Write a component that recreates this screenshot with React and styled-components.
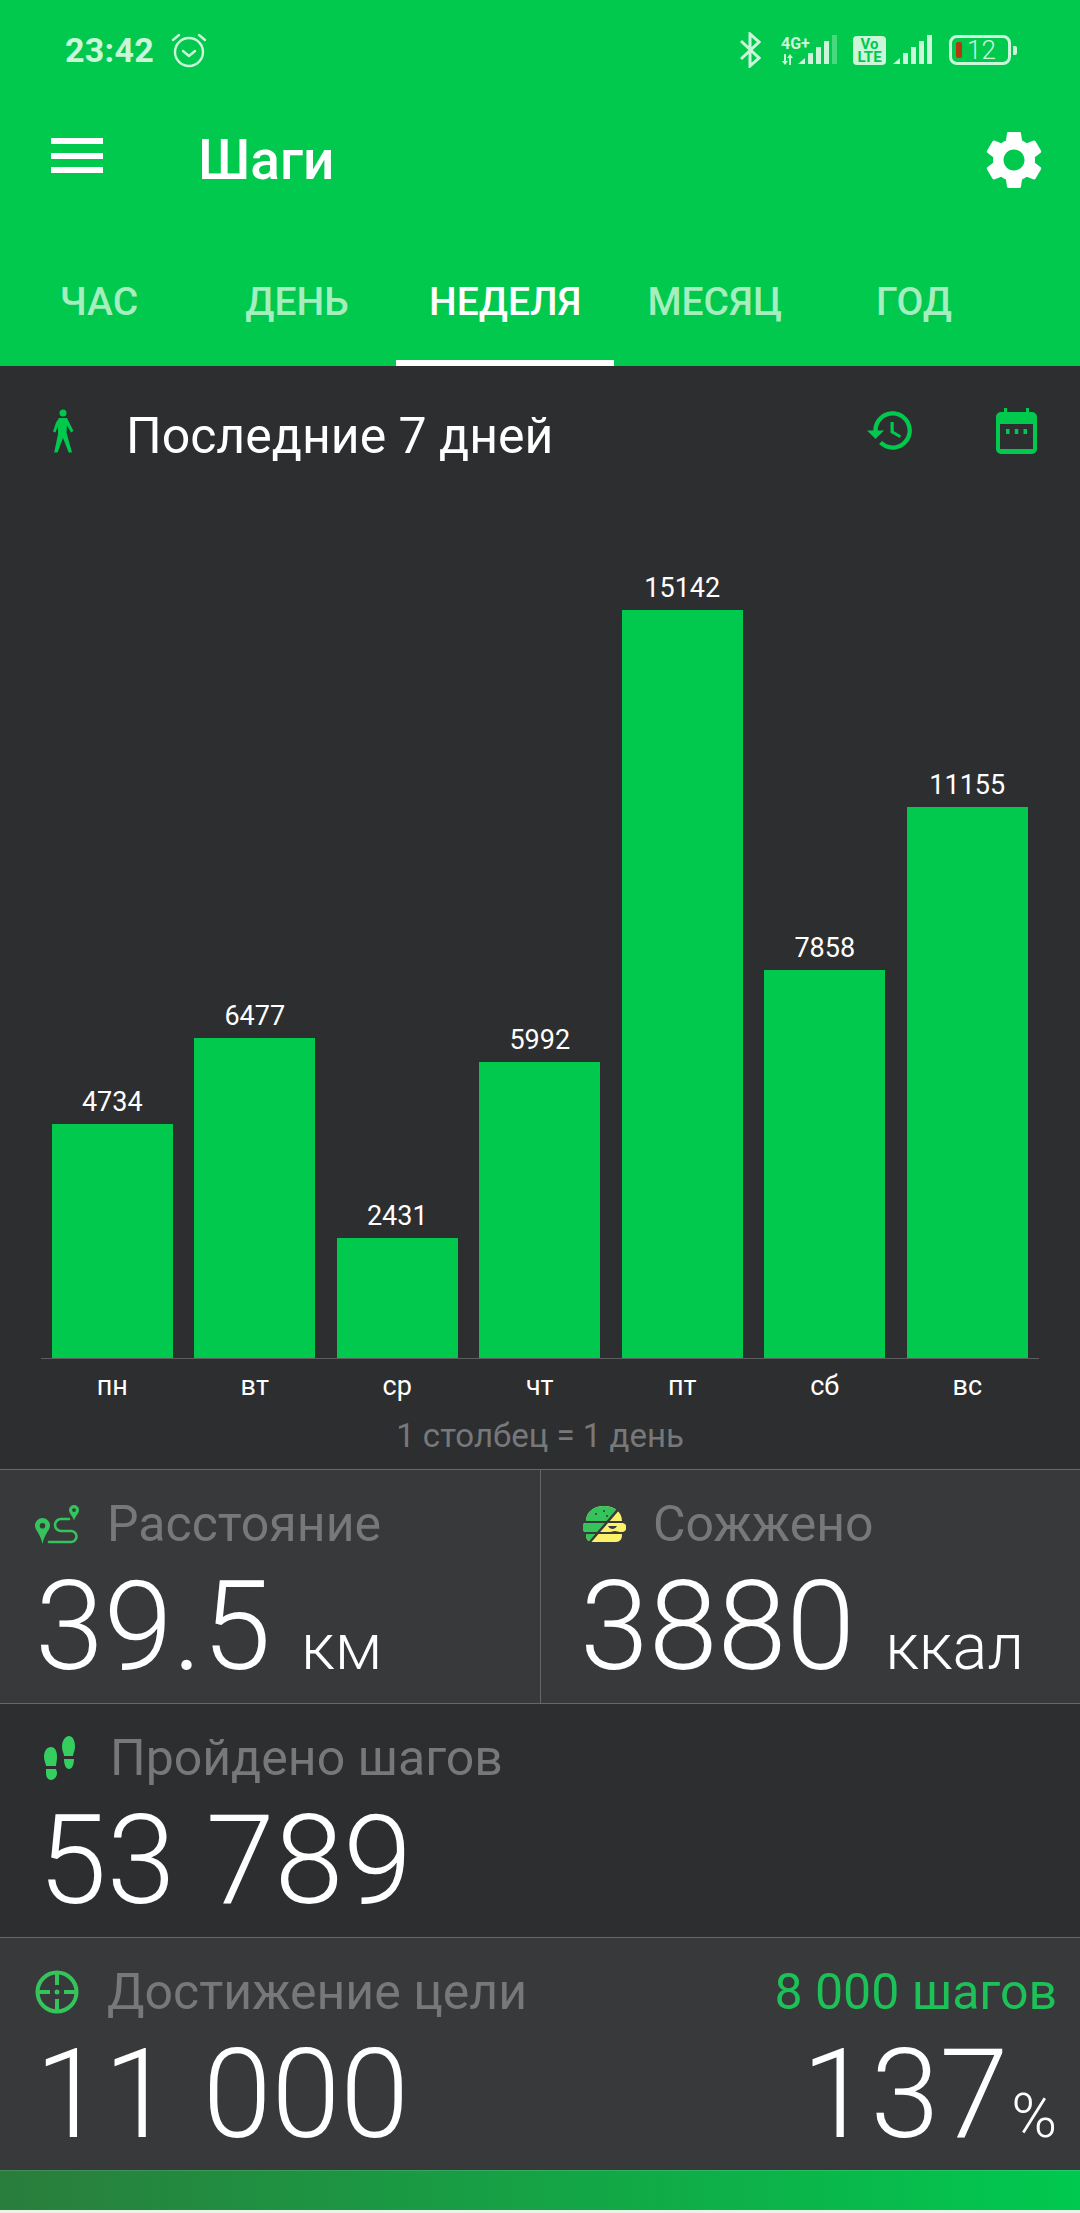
import React from 'react';
import styled, { createGlobalStyle } from 'styled-components';

const GREEN = '#00c94e';
const ICON_GREEN = '#35c45c';
const STATUS = '#ccf6da';
const PANEL = '#38393b';

const days = [
  { name: 'пн', steps: 4734 },
  { name: 'вт', steps: 6477 },
  { name: 'ср', steps: 2431 },
  { name: 'чт', steps: 5992 },
  { name: 'пт', steps: 15142 },
  { name: 'сб', steps: 7858 },
  { name: 'вс', steps: 11155 },
];

const tabs = ['ЧАС', 'ДЕНЬ', 'НЕДЕЛЯ', 'МЕСЯЦ', 'ГОД'];

const GlobalStyle = createGlobalStyle`
  html, body {
    margin: 0;
    padding: 0;
    background: #2d2e30;
  }
  * {
    box-sizing: border-box;
  }
`;

const Page = styled.div`
  width: 1080px;
  height: 2213px;
  overflow: hidden;
  display: flex;
  flex-direction: column;
  background: #2d2e30;
  font-family: Roboto, "Noto Sans", sans-serif;
  color: #fff;
`;

const Header = styled.header`
  background: ${GREEN};
  height: 366px;
  display: flex;
  flex-direction: column;
`;

const StatusBar = styled.div`
  height: 100px;
  padding: 30px 63px 0 65px;
  display: flex;
  align-items: flex-start;
  color: ${STATUS};
`;

const Clock = styled.span`
  font-size: 34px;
  line-height: 40px;
  font-weight: 700;
  letter-spacing: 0.3px;
`;

const StatusLeft = styled.div`
  display: flex;
  align-items: center;
  gap: 17px;
  flex: 1;
`;

const StatusRight = styled.div`
  display: flex;
  align-items: center;
  height: 40px;
`;

const NetLabel = styled.div`
  display: flex;
  flex-direction: column;
  gap: 3px;
  width: 34px;
  margin: 0 -17px 0 20px;
  font-size: 16px;
  line-height: 15px;
  font-weight: 700;
`;

const VoLte = styled.div`
  width: 33px;
  height: 29px;
  margin: 0 7px 0 15px;
  background: ${STATUS};
  border-radius: 4px;
  color: ${GREEN};
  font-size: 15px;
  line-height: 13px;
  font-weight: 700;
  white-space: pre-line;
  text-align: center;
  padding-top: 2px;
`;

const Battery = styled.div`
  width: 62px;
  height: 30px;
  margin-left: 16px;
  border: 3px solid ${STATUS};
  border-radius: 8px;
  display: flex;
  align-items: center;
  padding-left: 4px;
  gap: 5px;
  font-size: 26px;
  font-weight: 300;
`;

const BatteryLevel = styled.i`
  width: 6px;
  height: 16px;
  border-radius: 2px;
  background: #b5390f;
`;

const BatteryNub = styled.i`
  width: 4px;
  height: 9px;
  margin-left: 2px;
  border-radius: 0 2px 2px 0;
  background: ${STATUS};
`;

const Toolbar = styled.div`
  height: 120px;
  padding: 0 31px 0 51px;
  display: flex;
  align-items: center;
`;

const Burger = styled.div`
  width: 52px;
  height: 35px;
  margin-bottom: 9px;
  display: flex;
  flex-direction: column;
  justify-content: space-between;
  span {
    height: 6px;
    background: #fff;
  }
`;

const Title = styled.h1`
  flex: 1;
  margin: 0 0 0 95px;
  font-size: 55px;
  font-weight: 500;
  line-height: 60px;
`;

const Tabs = styled.nav`
  display: flex;
  height: 146px;
`;

const Tab = styled.div`
  min-width: 198px;
  padding: 24px 33px 0;
  display: flex;
  align-items: center;
  justify-content: center;
  font-size: 39px;
  font-weight: 500;
  color: ${(p) => (p.$active ? '#fff' : '#a5eebe')};
  border-bottom: 6px solid ${(p) => (p.$active ? '#fff' : 'transparent')};
`;

const SubHeader = styled.div`
  height: 129px;
  padding: 0 43px 0 50px;
  display: flex;
  align-items: center;
`;

const RangeTitle = styled.div`
  flex: 1;
  margin-left: 51px;
  padding-top: 10px;
  font-size: 50px;
  line-height: 56px;
`;

const ActionIcons = styled.div`
  display: flex;
  align-items: center;
  gap: 82px;
`;

const Chart = styled.section`
  height: 974px;
  padding-left: 41px;
  display: flex;
  flex-direction: column;
`;

const Bars = styled.div`
  height: 864px;
  width: 998px;
  display: grid;
  grid-template-columns: repeat(7, 142.5px);
  border-bottom: 1px solid #5c5d5f;
`;

const BarColumn = styled.div`
  display: flex;
  flex-direction: column;
  align-items: center;
  justify-content: flex-end;
`;

const BarValue = styled.span`
  font-size: 27px;
  line-height: 32px;
  margin-bottom: 6px;
`;

const Bar = styled.div`
  width: 121px;
  background: ${GREEN};
`;

const DayRow = styled.div`
  width: 998px;
  height: 53px;
  display: grid;
  grid-template-columns: repeat(7, 142.5px);
  align-items: center;
  text-align: center;
  font-size: 27px;
`;

const ChartNote = styled.div`
  width: 998px;
  height: 48px;
  line-height: 48px;
  text-align: center;
  font-size: 33px;
  color: #77787a;
`;

const StatRow = styled.div`
  height: ${(p) => p.$height}px;
  display: flex;
  border-top: 1px solid #66676a;
  background: ${(p) => (p.$raised ? PANEL : '#2d2e30')};
`;

const StatCell = styled.div`
  flex: ${(p) => (p.$half ? '0 0 540px' : '1')};
  padding: 29px 23px 0 ${(p) => p.$inset}px;
  & + & {
    border-left: 1px solid #66676a;
  }
`;

const StatHead = styled.div`
  height: 50px;
  display: flex;
  align-items: center;
  gap: ${(p) => p.$gap}px;
  font-size: 50px;
  color: #77787a;
`;

const StatTitle = styled.span`
  flex: 1;
  white-space: nowrap;
`;

const GoalTarget = styled.span`
  color: #1cc258;
  font-size: 50px;
`;

const StatBody = styled.div`
  margin: 13px 0 0 ${(p) => p.$shift || 0}px;
  display: flex;
  justify-content: space-between;
  align-items: baseline;
`;

const StatValue = styled.span`
  font-size: 124px;
  line-height: 130px;
  font-weight: 300;
  white-space: nowrap;
`;

const StatUnit = styled.span`
  margin-left: ${(p) => p.$gap}px;
  font-size: ${(p) => p.$size}px;
  font-weight: 300;
`;

const ProgressBar = styled.div`
  height: 40px;
  background: linear-gradient(90deg, #2a7d3c 0%, #00c94f 100%);
  border-top: 1px solid rgba(255, 255, 255, 0.12);
`;

const BottomEdge = styled.div`
  flex: 1;
  background: #e6f4ea;
`;

const Bluetooth = () => (
  <svg width="22" height="36" viewBox="0 0 22 36" fill="none" stroke={STATUS} strokeWidth="3">
    <path d="M2 9l18 17-9 8V2l9 8L2 27" />
  </svg>
);

const Signal = ({ faded }) => (
  <svg width="40" height="30" viewBox="0 0 40 30" fill={STATUS}>
    <path d="M0 29l7-6v6z" />
    <rect x="10" y="18" width="5" height="11" />
    <rect x="18" y="12" width="5" height="17" />
    <rect x="26" y="6" width="5" height="23" />
    <rect x="34" y="0" width="5" height="29" opacity={faded ? 0.35 : 1} />
  </svg>
);

const DataArrows = () => (
  <svg width="13" height="11" viewBox="0 0 13 11" fill={STATUS}>
    <path d="M3 0h2v7h2l-3 4-3-4h2zM8 11h2V4h2L9 0 6 4h2z" />
  </svg>
);

const AlarmIcon = () => (
  <svg width="36" height="36" viewBox="0 0 36 36" fill="none" stroke={STATUS} strokeWidth="2.4" strokeLinecap="round" strokeLinejoin="round">
    <circle cx="18" cy="20" r="14" />
    <path d="M12 19l6 5 6-5M2 8l6-5M34 8l-6-5" />
  </svg>
);

const GearIcon = () => (
  <svg width="70" height="70" viewBox="0 0 24 24" fill="#fff">
    <path d="M19.14 12.94c.04-.3.06-.61.06-.94 0-.32-.02-.64-.07-.94l2.03-1.58c.18-.14.23-.41.12-.61l-1.92-3.32c-.12-.22-.37-.29-.59-.22l-2.39.96c-.5-.38-1.03-.7-1.62-.94l-.36-2.54c-.04-.24-.24-.41-.48-.41h-3.84c-.24 0-.43.17-.47.41l-.36 2.54c-.59.24-1.13.57-1.62.94l-2.39-.96c-.22-.08-.47 0-.59.22L2.74 8.87c-.12.21-.08.47.12.61l2.03 1.58c-.05.3-.09.63-.09.94s.02.64.07.94l-2.03 1.58c-.18.14-.23.41-.12.61l1.92 3.32c.12.22.37.29.59.22l2.39-.96c.5.38 1.03.7 1.62.94l.36 2.54c.05.24.24.41.48.41h3.84c.24 0 .44-.17.47-.41l.36-2.54c.59-.24 1.13-.56 1.62-.94l2.39.96c.22.08.47 0 .59-.22l1.92-3.32c.12-.22.07-.47-.12-.61l-2.01-1.58zM12 15.6c-1.98 0-3.6-1.62-3.6-3.6s1.62-3.6 3.6-3.6 3.6 1.62 3.6 3.6-1.62 3.6-3.6 3.6z" />
  </svg>
);

const WalkIcon = () => (
  <svg width="25" height="44" viewBox="0 0 25 44" fill={GREEN}>
    <circle cx="13" cy="4" r="3.5" />
    <path d="M9 9h8l2 4 4.500 9-2.500 1.500-4-7-.5 7 5.500 20h-3.300L13 29 7.500 43.500H4.200L8 25v-8l-2.500 6.500L3 22.500l3-9z" />
  </svg>
);

const HistoryIcon = () => (
  <svg width="47" height="47" viewBox="1 2 22 20" fill={GREEN}>
    <path d="M13 3c-4.970 0-9 4.030-9 9H1l3.890 3.890.07.14L9 12H6c0-3.870 3.130-7 7-7s7 3.130 7 7-3.130 7-7 7c-1.930 0-3.680-.79-4.940-2.060l-1.420 1.420C8.270 19.990 10.510 21 13 21c4.970 0 9-4.030 9-9s-4.030-9-9-9zm-1 5v5l4.280 2.540.72-1.210-3.500-2.080V8H12z" />
  </svg>
);

const CalendarIcon = () => (
  <svg width="41" height="46" viewBox="0 0 41 46" fill={GREEN}>
    <path fillRule="evenodd" d="M8 0h3v4h19V0h3v4h3a5 5 0 0 1 5 5v32a5 5 0 0 1-5 5H5a5 5 0 0 1-5-5V9a5 5 0 0 1 5-5h3zM4 16v25h33V16z" />
    <rect x="10" y="21" width="3.500" height="5" />
    <rect x="18.800" y="21" width="3.500" height="5" />
    <rect x="27.500" y="21" width="3.500" height="5" />
  </svg>
);

const RouteIcon = () => (
  <svg width="44" height="39" viewBox="0 0 44 39" fill="none">
    <path fillRule="evenodd" fill={ICON_GREEN} d="M7.500 13a7.500 7.500 0 0 1 7.500 7.500c0 5-5 7-7.500 18.500C5 27.500 0 25.500 0 20.500A7.500 7.500 0 0 1 7.500 13zm0 5a2.800 2.800 0 1 0 0 5.600 2.800 2.800 0 0 0 0-5.600z" />
    <path fillRule="evenodd" fill={ICON_GREEN} d="M39 0a5 5 0 0 1 5 5c0 3.500-3.500 5.500-5 10.500C37.500 10.500 34 8.500 34 5a5 5 0 0 1 5-5zm0 3.200a1.900 1.900 0 1 0 0 3.800 1.900 1.900 0 0 0 0-3.800z" />
    <path stroke={ICON_GREEN} strokeWidth="2.600" strokeLinecap="round" d="M34 14H26a6 6 0 0 0 0 12h10a5.500 5.500 0 0 1 0 11H14" />
  </svg>
);

// половина зелёная, половина жёлтая, разрез по диагонали
const BurgerParts = ({ fill }) => (
  <g fill={fill}>
    <path d="M3 15C3 6 11 0 21 0s18 6 18 15z" />
    <path d="M3 17h36a3.500 3.500 0 0 1 0 9h-2c-2 0-3-1-5-1s-3 1-5 1H3a4.500 4.500 0 0 1 0-9z" />
    <path d="M3 28h36v1c0 4-2 7-6 7H9c-4 0-6-3-6-7z" />
  </g>
);

const BurgerIcon = () => (
  <svg width="43" height="36" viewBox="0 0 43 36">
    <defs>
      <clipPath id="burger-left">
        <path d="M-1-1H38L5 36H-1z" />
      </clipPath>
    </defs>
    <BurgerParts fill="#fbf26a" />
    <g clipPath="url(#burger-left)">
      <BurgerParts fill="#35c45c" />
      <circle cx="13" cy="8" r="1" fill={PANEL} />
      <circle cx="21" cy="5" r="1" fill={PANEL} />
      <circle cx="24" cy="10" r="1" fill={PANEL} />
    </g>
    <path d="M39-1L6 37" stroke={PANEL} strokeWidth="2.500" />
    <path d="M25 20h9c-1 2-3 3-4.500 3S26 22 25 20z" fill={PANEL} />
  </svg>
);

const StepsIcon = () => (
  <svg width="32" height="45" viewBox="0 0 32 45" fill="#35cf5f">
    <path d="M7 11c4 0 6 4 6 10 0 4-1 7-1 9H2c0-2-2-5-2-9C0 15 3 11 7 11zM2 33h10c0 1 1 2 1 4 0 4-3 7-6 7s-5-3-5-7z" />
    <path d="M25 0c4 0 6 5 6 11 0 4-2 6-2 9H20c0-3-2-5-2-9 0-6 3-11 7-11zM20 23h10c0 6-2 10-5 10s-5-4-5-10z" />
  </svg>
);

const TargetIcon = () => (
  <svg width="44" height="44" viewBox="0 0 44 44" fill="none" stroke={ICON_GREEN} strokeWidth="4">
    <circle cx="22" cy="22" r="19.500" />
    <path d="M22 2v13M22 29v13M2 22h13M29 22h13" />
    <circle cx="22" cy="22" r="2.500" fill={ICON_GREEN} stroke="none" />
  </svg>
);

export default function App() {
  return (
    <Page>
      <GlobalStyle />
      <Header>
        <StatusBar>
          <StatusLeft>
            <Clock>23:42</Clock>
            <AlarmIcon />
          </StatusLeft>
          <StatusRight>
            <Bluetooth />
            <NetLabel>
              <span>4G+</span>
              <DataArrows />
            </NetLabel>
            <Signal faded />
            <VoLte>{'Vo\nLTE'}</VoLte>
            <Signal />
            <Battery>
              <BatteryLevel />
              <span>12</span>
            </Battery>
            <BatteryNub />
          </StatusRight>
        </StatusBar>
        <Toolbar>
          <Burger>
            <span />
            <span />
            <span />
          </Burger>
          <Title>Шаги</Title>
          <GearIcon />
        </Toolbar>
        <Tabs>
          {tabs.map((tab) => (
            <Tab key={tab} $active={tab === 'НЕДЕЛЯ'}>
              {tab}
            </Tab>
          ))}
        </Tabs>
      </Header>

      <SubHeader>
        <WalkIcon />
        <RangeTitle>Последние 7 дней</RangeTitle>
        <ActionIcons>
          <HistoryIcon />
          <CalendarIcon />
        </ActionIcons>
      </SubHeader>

      <Chart>
        <Bars>
          {days.map((day) => (
            <BarColumn key={day.name}>
              <BarValue>{day.steps}</BarValue>
              <Bar style={{ height: Math.round(day.steps * 0.0494) }} />
            </BarColumn>
          ))}
        </Bars>
        <DayRow>
          {days.map((day) => (
            <span key={day.name}>{day.name}</span>
          ))}
        </DayRow>
        <ChartNote>1 столбец = 1 день</ChartNote>
      </Chart>

      <StatRow $height={234} $raised>
        <StatCell $half $inset={35}>
          <StatHead $gap={28}>
            <RouteIcon />
            <StatTitle>Расстояние</StatTitle>
          </StatHead>
          <StatBody>
            <span>
              <StatValue>39.5</StatValue>
              <StatUnit $size={65} $gap={30}>км</StatUnit>
            </span>
          </StatBody>
        </StatCell>
        <StatCell $inset={42}>
          <StatHead $gap={27}>
            <BurgerIcon />
            <StatTitle>Сожжено</StatTitle>
          </StatHead>
          <StatBody $shift={-3}>
            <span>
              <StatValue>3880</StatValue>
              <StatUnit $size={65} $gap={30}>ккал</StatUnit>
            </span>
          </StatBody>
        </StatCell>
      </StatRow>

      <StatRow $height={234}>
        <StatCell $inset={44}>
          <StatHead $gap={34}>
            <StepsIcon />
            <StatTitle>Пройдено шагов</StatTitle>
          </StatHead>
          <StatBody $shift={-6}>
            <StatValue>53 789</StatValue>
          </StatBody>
        </StatCell>
      </StatRow>

      <StatRow $height={233} $raised>
        <StatCell $inset={35}>
          <StatHead $gap={28}>
            <TargetIcon />
            <StatTitle>Достижение цели</StatTitle>
            <GoalTarget>8 000 шагов</GoalTarget>
          </StatHead>
          <StatBody>
            <StatValue>11 000</StatValue>
            <span>
              <StatValue>137</StatValue>
              <StatUnit $size={62} $gap={3}>%</StatUnit>
            </span>
          </StatBody>
        </StatCell>
      </StatRow>

      <ProgressBar />
      <BottomEdge />
    </Page>
  );
}
